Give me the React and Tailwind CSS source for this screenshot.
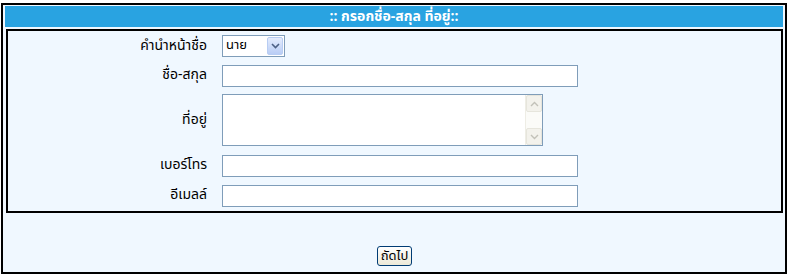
import React from "react";

const font = { fontFamily: 'Tahoma, "Noto Sans Thai", "Loma", "Garuda", "Noto Sans", sans-serif' };

function Label({ children }) {
  return (
    <div className="w-[201px] pr-[2px] text-right text-[14px] text-black leading-none">{children}</div>
  );
}

function TextInput() {
  return (
    <input
      type="text"
      className="w-[356px] h-[22px] border border-[#7f9db9] bg-white px-1 text-[13px] outline-none"
    />
  );
}

export default function App() {
  return (
    <div className="w-[788px] h-[274px] bg-white pt-[3px] pl-[1px]" style={font}>
      <div className="w-[786px] h-[271px] border-2 border-black bg-[#f0f8ff] px-[2px] pt-[1px]">
        <div className="h-[21px] bg-[#29a3e1] flex items-center justify-center text-white font-bold text-[14px]">
          :: กรอกชื่อ-สกุล ที่อยู่::
        </div>
        <div className="ml-[1px] mt-[2px] w-[777px] h-[184px] border-2 border-black pt-[4px] flex flex-col">
          {/* row 1 */}
          <div className="flex items-center h-[22px]">
            <Label>คำนำหน้าชื่อ</Label>
            <div className="ml-[13px] w-[63px] h-[22px] border border-[#7f9db9] bg-white flex items-center justify-between pl-[3px] pr-[1px]">
              <span className="text-[13px] text-black">นาย</span>
              <div className="w-[16px] h-[18px] rounded-[2px] border border-[#b8cdf3] bg-gradient-to-b from-[#e4ecfd] to-[#b9cdf5] flex items-center justify-center">
                <svg width="9" height="6" viewBox="0 0 9 6">
                  <path d="M1 1 L4.5 4.5 L8 1" fill="none" stroke="#4d6185" strokeWidth="1.6" />
                </svg>
              </div>
            </div>
          </div>
          {/* row 2 */}
          <div className="flex items-center h-[22px] mt-[7px]">
            <Label>ชื่อ-สกุล</Label>
            <div className="ml-[13px]"><TextInput /></div>
          </div>
          {/* row 3 */}
          <div className="flex items-center h-[52px] mt-[8px]">
            <Label>ที่อยู่</Label>
            <div className="ml-[13px] w-[321px] h-[52px] border border-[#7f9db9] bg-white flex">
              <textarea className="flex-1 resize-none outline-none border-0 overflow-hidden text-[13px] p-1" />
              <div className="w-[17px] h-full bg-[#fbfbf8] border-l border-[#eeede5] flex flex-col justify-between">
                <div className="h-[17px] bg-[#f3f2ec] border border-[#e6e5dc] rounded-[2px] flex items-center justify-center">
                  <svg width="9" height="6" viewBox="0 0 9 6">
                    <path d="M1 5 L4.5 1.5 L8 5" fill="none" stroke="#c2c1b8" strokeWidth="1.4" />
                  </svg>
                </div>
                <div className="h-[17px] bg-[#f3f2ec] border border-[#e6e5dc] rounded-[2px] flex items-center justify-center">
                  <svg width="9" height="6" viewBox="0 0 9 6">
                    <path d="M1 1 L4.5 4.5 L8 1" fill="none" stroke="#c2c1b8" strokeWidth="1.4" />
                  </svg>
                </div>
              </div>
            </div>
          </div>
          {/* row 4 */}
          <div className="flex items-center h-[22px] mt-[8px]">
            <Label>เบอร์โทร</Label>
            <div className="ml-[13px]"><TextInput /></div>
          </div>
          {/* row 5 */}
          <div className="flex items-center h-[22px] mt-[8px]">
            <Label>อีเมลล์</Label>
            <div className="ml-[13px]"><TextInput /></div>
          </div>
        </div>
        <div className="flex justify-center pt-[33px] pl-[1px]">
          <button className="w-[35px] h-[20px] rounded-[3px] border border-[#003c74] bg-gradient-to-b from-white to-[#ece9d8] text-[13px] text-black leading-none flex items-center justify-center">
            ถัดไป
          </button>
        </div>
      </div>
    </div>
  );
}
